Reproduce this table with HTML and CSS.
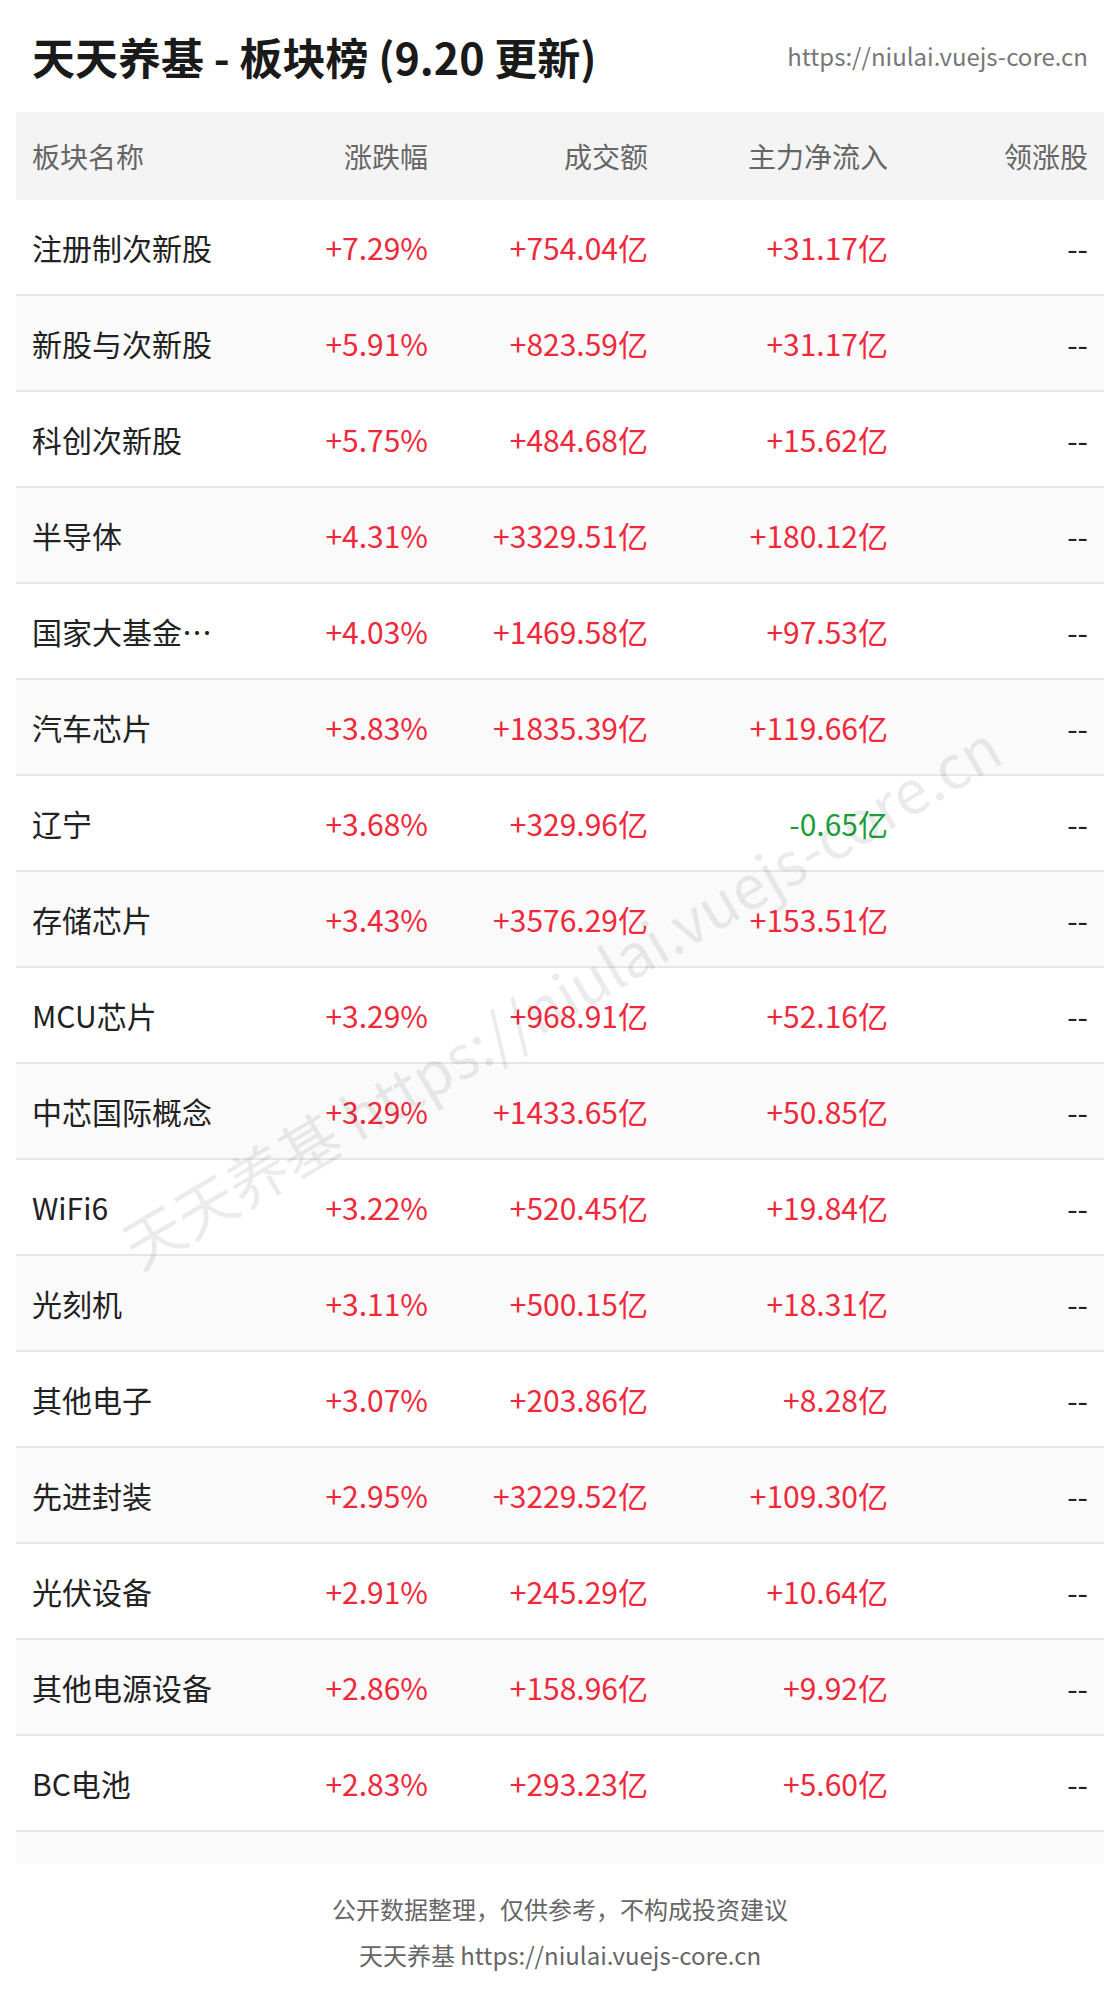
FILE: index.html
```html
<!DOCTYPE html>
<html lang="zh-CN">
<head>
<meta charset="utf-8">
<title>天天养基 - 板块榜</title>
<link rel="stylesheet" href="styles.css">
</head>
<body>
<div class="page">
  <header class="top">
    <h1 class="title">天天养基 - 板块榜 (9.20 更新)</h1>
    <span class="site">https://niulai.vuejs-core.cn</span>
  </header>
  <div class="board">
    <div class="row head">
      <div class="cell name">板块名称</div>
      <div class="cell">涨跌幅</div>
      <div class="cell">成交额</div>
      <div class="cell">主力净流入</div>
      <div class="cell">领涨股</div>
    </div>
    <div class="row"><div class="cell name">注册制次新股</div><div class="cell up">+7.29%</div><div class="cell up">+754.04亿</div><div class="cell up">+31.17亿</div><div class="cell lead">--</div></div>
    <div class="row"><div class="cell name">新股与次新股</div><div class="cell up">+5.91%</div><div class="cell up">+823.59亿</div><div class="cell up">+31.17亿</div><div class="cell lead">--</div></div>
    <div class="row"><div class="cell name">科创次新股</div><div class="cell up">+5.75%</div><div class="cell up">+484.68亿</div><div class="cell up">+15.62亿</div><div class="cell lead">--</div></div>
    <div class="row"><div class="cell name">半导体</div><div class="cell up">+4.31%</div><div class="cell up">+3329.51亿</div><div class="cell up">+180.12亿</div><div class="cell lead">--</div></div>
    <div class="row"><div class="cell name">国家大基金持股</div><div class="cell up">+4.03%</div><div class="cell up">+1469.58亿</div><div class="cell up">+97.53亿</div><div class="cell lead">--</div></div>
    <div class="row"><div class="cell name">汽车芯片</div><div class="cell up">+3.83%</div><div class="cell up">+1835.39亿</div><div class="cell up">+119.66亿</div><div class="cell lead">--</div></div>
    <div class="row"><div class="cell name">辽宁</div><div class="cell up">+3.68%</div><div class="cell up">+329.96亿</div><div class="cell down">-0.65亿</div><div class="cell lead">--</div></div>
    <div class="row"><div class="cell name">存储芯片</div><div class="cell up">+3.43%</div><div class="cell up">+3576.29亿</div><div class="cell up">+153.51亿</div><div class="cell lead">--</div></div>
    <div class="row"><div class="cell name">MCU芯片</div><div class="cell up">+3.29%</div><div class="cell up">+968.91亿</div><div class="cell up">+52.16亿</div><div class="cell lead">--</div></div>
    <div class="row"><div class="cell name">中芯国际概念</div><div class="cell up">+3.29%</div><div class="cell up">+1433.65亿</div><div class="cell up">+50.85亿</div><div class="cell lead">--</div></div>
    <div class="row"><div class="cell name">WiFi6</div><div class="cell up">+3.22%</div><div class="cell up">+520.45亿</div><div class="cell up">+19.84亿</div><div class="cell lead">--</div></div>
    <div class="row"><div class="cell name">光刻机</div><div class="cell up">+3.11%</div><div class="cell up">+500.15亿</div><div class="cell up">+18.31亿</div><div class="cell lead">--</div></div>
    <div class="row"><div class="cell name">其他电子</div><div class="cell up">+3.07%</div><div class="cell up">+203.86亿</div><div class="cell up">+8.28亿</div><div class="cell lead">--</div></div>
    <div class="row"><div class="cell name">先进封装</div><div class="cell up">+2.95%</div><div class="cell up">+3229.52亿</div><div class="cell up">+109.30亿</div><div class="cell lead">--</div></div>
    <div class="row"><div class="cell name">光伏设备</div><div class="cell up">+2.91%</div><div class="cell up">+245.29亿</div><div class="cell up">+10.64亿</div><div class="cell lead">--</div></div>
    <div class="row"><div class="cell name">其他电源设备</div><div class="cell up">+2.86%</div><div class="cell up">+158.96亿</div><div class="cell up">+9.92亿</div><div class="cell lead">--</div></div>
    <div class="row"><div class="cell name">BC电池</div><div class="cell up">+2.83%</div><div class="cell up">+293.23亿</div><div class="cell up">+5.60亿</div><div class="cell lead">--</div></div>
  </div>
  <footer class="foot">
    <p class="foot-line">公开数据整理，仅供参考，不构成投资建议</p>
    <p class="foot-line">天天养基 https://niulai.vuejs-core.cn</p>
  </footer>
  <div class="watermark">天天养基 https://niulai.vuejs-core.cn</div>
</div>
</body>
</html>
```

FILE: styles.css
```css
html, body {
  margin: 0;
  padding: 0;
  background: #ffffff;
}

body {
  font-family: "Noto Sans CJK SC", "Noto Sans", sans-serif;
  color: #222222;
}

.page {
  position: relative;
  width: 1120px;
  min-height: 1992px;
  padding: 0 16px;
  box-sizing: border-box;
  overflow: hidden;
}

.top {
  height: 112px;
  display: flex;
  align-items: center;
  justify-content: space-between;
  padding: 0 16px;
  box-sizing: border-box;
}

.title {
  margin: 0;
  font-size: 43px;
  font-weight: 700;
  line-height: 64px;
  color: #1a1a1a;
}

.site {
  font-size: 24px;
  line-height: 36px;
  color: #777777;
}

.board {
  background: #fafafa;
  padding-bottom: 32px;
}

.row {
  display: grid;
  grid-template-columns: 224px 204px 220px 240px 200px;
  height: 96px;
  border-bottom: 2px solid #e6e6e6;
  box-sizing: border-box;
  align-items: center;
  font-size: 30px;
}

.row:nth-child(even) {
  background: #ffffff;
}

.row.head {
  height: 88px;
  background: #f4f4f4;
  border-bottom: none;
  font-size: 28px;
  color: #666666;
}

.cell {
  padding: 0 16px;
  text-align: right;
  white-space: nowrap;
  line-height: 48px;
}

.cell.name {
  text-align: left;
  overflow: hidden;
  text-overflow: ellipsis;
}

.up {
  color: #f0283a;
}

.down {
  color: #1a9f3c;
}

.lead {
  color: #222222;
}

.foot {
  padding: 22px 0 16px;
  text-align: center;
}

.foot-line {
  margin: 0;
  font-size: 24px;
  line-height: 46px;
  color: #666666;
}

.watermark {
  position: absolute;
  left: 50%;
  top: 994px;
  transform: translate(-50%, -50%) rotate(-30.5deg);
  font-size: 60px;
  line-height: 72px;
  white-space: nowrap;
  color: rgba(0, 0, 0, 0.08);
  pointer-events: none;
}
```
